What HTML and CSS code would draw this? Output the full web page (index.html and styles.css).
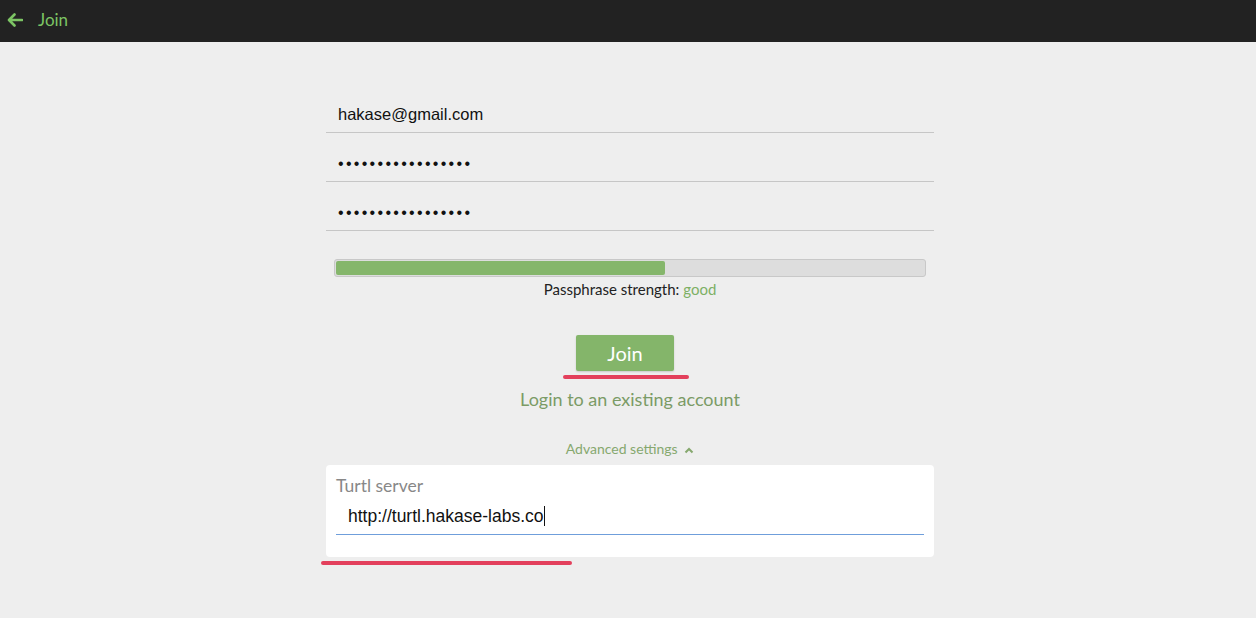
FILE: index.html
```html
<!DOCTYPE html>
<html lang="en">
<head>
  <meta charset="UTF-8" />
  <title>Join</title>
  <link rel="stylesheet" href="styles.css">
</head>
<body>
  <div class="topbar">
    <svg class="back" width="16" height="14" viewBox="0 0 16 14">
      <path d="M15 7H2.5M7.5 1.5L2 7l5.5 5.5" fill="none" stroke="#7cc464" stroke-width="2.6" stroke-linecap="round" stroke-linejoin="round"/>
    </svg>
    <span class="title">Join</span>
  </div>

  <div class="main">
    <form class="join-form">
      <input type="text" class="field" value="hakase@gmail.com" />
      <input type="password" class="field" value="abcdefghijklmnopq" />
      <input type="password" class="field" value="abcdefghijklmnopq" />

      <div class="strength">
        <div class="bar"><div class="fill" style="width: 56%"></div></div>
        <p>Passphrase strength: <span class="good">good</span></p>
      </div>

      <div class="actions">
        <button type="button" class="join">Join</button>
        <div class="mark mark-join"></div>
        <a class="login" href="#">Login to an existing account</a>
      </div>

      <div class="advanced">
        <span>Advanced settings</span>
        <svg width="10" height="7" viewBox="0 0 10 7">
          <path d="M1.5 5.5L5 2l3.5 3.5" fill="none" stroke="#86a86e" stroke-width="2"/>
        </svg>
      </div>

      <div class="server-box">
        <label>Turtl server</label>
        <div class="server-input">http://turtl.hakase-labs.co<span class="cursor"></span></div>
      </div>
      <div class="mark mark-server"></div>
    </form>
  </div>
</body>
</html>
```

FILE: styles.css
```css
body {
  margin: 0;
  background: #eeeeee;
  font-family: Lato, "Noto Sans", sans-serif;
  color: #222;
}

.topbar {
  height: 42px;
  background: #222222;
  display: flex;
  align-items: center;
  padding-left: 7px;
  box-sizing: border-box;
}

.back {
  margin-top: -3px;
}

.title {
  margin-left: 15px;
  margin-top: -4px;
  color: #7cc464;
  font-size: 17px;
}

.main {
  padding-top: 42px;
  padding-left: 4px;
}

.join-form {
  width: 608px;
  margin: 0 auto;
}

.field {
  display: block;
  width: 100%;
  height: 49px;
  padding: 13px 12px 0;
  border: none;
  border-bottom: 1px solid #c6c6c6;
  background: transparent;
  box-sizing: border-box;
  font-family: "Liberation Sans", Arial, sans-serif;
  font-size: 16.5px;
  color: #111;
  outline: none;
}

input[type="password"] {
  letter-spacing: 2.3px;
  font-size: 16px;
}

.strength {
  margin-top: 28px;
  text-align: center;
}

.bar {
  margin: 0 8px;
  height: 18px;
  border: 1px solid #c8c8c8;
  border-radius: 3px;
  background: #dddddd;
  padding: 1px;
  box-sizing: border-box;
}

.fill {
  height: 100%;
  background: #85b66b;
  border-radius: 2px;
}

.strength p {
  margin: 3px 0 0;
  font-size: 15px;
  line-height: 18px;
}

.good {
  color: #7db064;
}

.actions {
  margin-top: 37px;
  display: flex;
  flex-direction: column;
  align-items: center;
}

.join {
  width: 98px;
  height: 36px;
  margin-right: 10px;
  border: none;
  border-radius: 2px;
  background: #84b56a;
  color: white;
  font-family: Lato, sans-serif;
  font-size: 20px;
  box-shadow: 0 1px 2px rgba(0, 0, 0, 0.15);
}

.mark {
  height: 4px;
  border-radius: 2px;
  background: #e3405c;
}

.mark-join {
  width: 126px;
  margin-top: 4px;
  margin-right: 8px;
}

.login {
  margin-top: 9px;
  font-size: 18px;
  line-height: 22px;
  color: #7b9b66;
  text-decoration: none;
}

.advanced {
  margin-top: 30px;
  text-align: center;
  font-size: 14px;
  line-height: 17px;
  color: #86a86e;
}

.advanced svg {
  margin-left: 3px;
}

.server-box {
  margin-top: 8px;
  height: 92px;
  background: white;
  border-radius: 4px;
  padding: 11px 10px 0;
  box-sizing: border-box;
}

.server-box label {
  display: block;
  font-size: 17.5px;
  line-height: 20px;
  color: #888;
}

.server-input {
  margin-top: 10px;
  padding: 0 12px 8px;
  border-bottom: 1px solid #6f9edb;
  font-family: "Liberation Sans", Arial, sans-serif;
  font-size: 17.5px;
  line-height: 20px;
  color: #111;
}

.cursor {
  display: inline-block;
  width: 1px;
  height: 20px;
  background: #111;
  vertical-align: -4px;
}

.mark-server {
  width: 251px;
  margin-top: 4px;
  margin-left: -5px;
}
```
